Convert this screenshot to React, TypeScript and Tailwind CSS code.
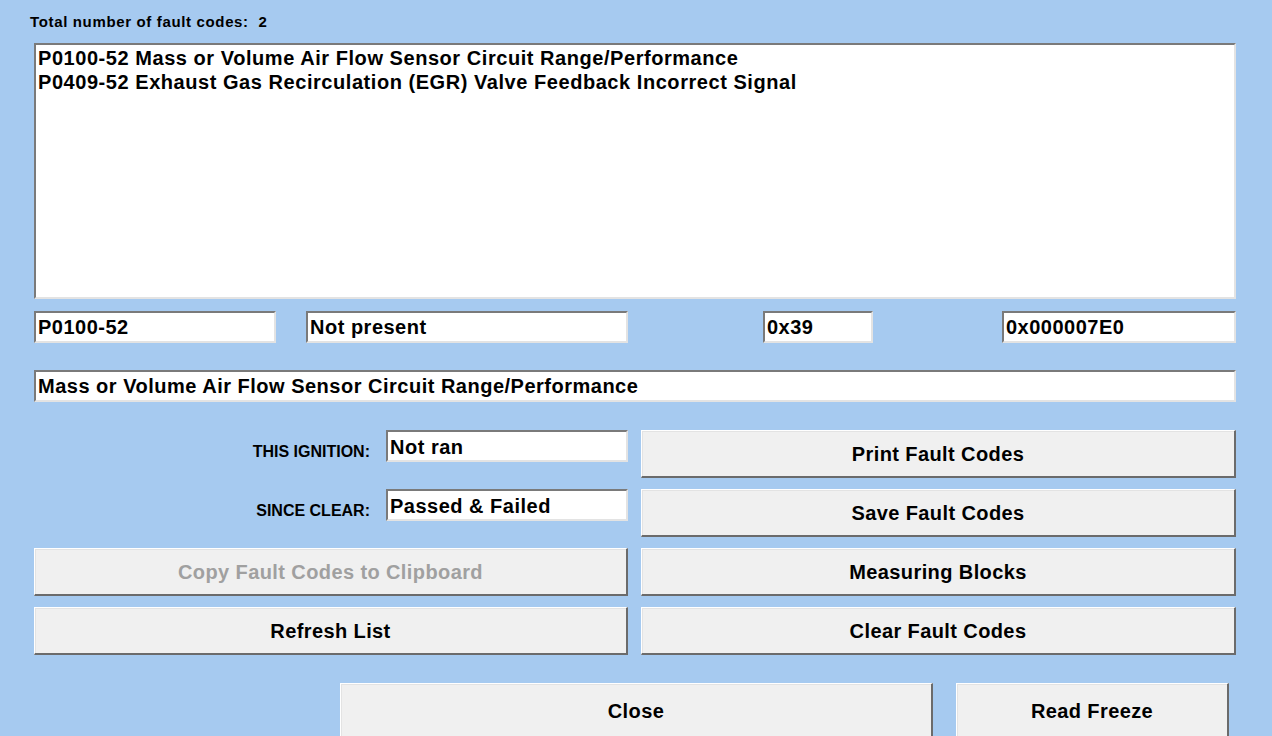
import React from "react";

// sunken edit box, classic win32 look
const Field = ({
  children,
  className = "",
}: {
  children?: React.ReactNode;
  className?: string;
}) => (
  <div
    className={`flex h-[32px] shrink-0 items-center overflow-hidden whitespace-nowrap border-t-2 border-l-2 border-r-2 border-b-2 border-t-[#7a7a7a] border-l-[#7a7a7a] border-r-[#e3e3e3] border-b-[#e3e3e3] bg-white px-[2px] text-[20px] font-bold tracking-[0.5px] text-black ${className}`}
  >
    {children}
  </div>
);

// raised push button
const Btn = ({
  label,
  disabled = false,
  className = "",
}: {
  label: string;
  disabled?: boolean;
  className?: string;
}) => (
  <button
    className={`flex shrink-0 items-center justify-center border-t border-l border-r-2 border-b-2 border-t-white border-l-white border-r-[#6b6b6b] border-b-[#6b6b6b] bg-[#f0f0f0] text-[20px] font-bold tracking-[0.4px] shadow-[inset_1px_1px_0_#e3e3e3] ${
      disabled ? "text-[#a0a0a0]" : "text-black"
    } ${className}`}
  >
    {label}
  </button>
);

const faults = [
  "P0100-52 Mass or Volume Air Flow Sensor Circuit Range/Performance",
  "P0409-52 Exhaust Gas Recirculation (EGR) Valve Feedback Incorrect Signal",
];

export default function App() {
  return (
    <div
      className="flex h-[736px] w-full flex-col overflow-hidden bg-[#a6caf0] pl-[34px] pr-[36px]"
      style={{ fontFamily: '"Liberation Sans", Arial, sans-serif' }}
    >
      <div className="-ml-[4px] mt-[13px] h-[18px] shrink-0 text-[15px] font-bold leading-[18px] tracking-[0.65px] text-black">
        Total number of fault codes:&nbsp; 2
      </div>

      {/* fault code list */}
      <div className="mt-[12px] h-[256px] shrink-0 border-t-2 border-l-2 border-r-2 border-b-2 border-t-[#7a7a7a] border-l-[#7a7a7a] border-r-[#e3e3e3] border-b-[#e3e3e3] bg-white px-[2px] pt-[1px]">
        {faults.map((f) => (
          <div
            key={f}
            className="h-[24px] whitespace-nowrap text-[20px] font-bold leading-[24px] tracking-[0.55px] text-black"
          >
            {f}
          </div>
        ))}
      </div>

      <div className="mt-[12px] flex shrink-0">
        <Field className="w-[242px]">P0100-52</Field>
        <Field className="ml-[30px] w-[322px]">Not present</Field>
        <Field className="ml-[135px] w-[110px]">0x39</Field>
        <Field className="ml-[129px] w-[234px]">0x000007E0</Field>
      </div>

      <Field className="mt-[27px] w-full">
        Mass or Volume Air Flow Sensor Circuit Range/Performance
      </Field>

      <div className="mt-[28px] grid shrink-0 grid-cols-[594px_595px] gap-x-[13px] gap-y-[11px]">
        <div className="flex h-[48px] items-start">
          <div className="mt-[10px] w-[352px] shrink-0 pr-[16px] text-right text-[16px] font-bold text-black">
            THIS IGNITION:
          </div>
          <Field className="w-[242px] items-start">Not ran</Field>
        </div>
        <Btn label="Print Fault Codes" className="h-[48px]" />

        <div className="flex h-[48px] items-start">
          <div className="mt-[10px] w-[352px] shrink-0 pr-[16px] text-right text-[16px] font-bold text-black">
            SINCE CLEAR:
          </div>
          <Field className="w-[242px] items-start">Passed &amp; Failed</Field>
        </div>
        <Btn label="Save Fault Codes" className="h-[48px]" />

        <Btn label="Copy Fault Codes to Clipboard" disabled className="h-[48px]" />
        <Btn label="Measuring Blocks" className="h-[48px]" />

        <Btn label="Refresh List" className="h-[48px]" />
        <Btn label="Clear Fault Codes" className="h-[48px]" />
      </div>

      <div className="mt-[28px] flex shrink-0">
        <Btn label="Close" className="ml-[306px] h-[56px] w-[593px]" />
        <Btn label="Read Freeze" className="ml-[23px] h-[56px] w-[273px]" />
      </div>
    </div>
  );
}
